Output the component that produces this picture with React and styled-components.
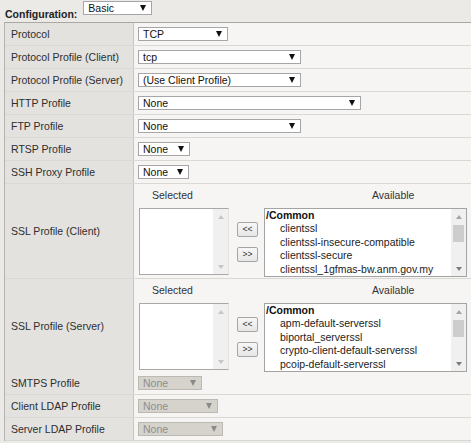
import React from 'react'
import styled, { createGlobalStyle } from 'styled-components'

const GlobalStyle = createGlobalStyle`
  html, body {
    margin: 0;
    padding: 0;
    background: #ebeae7;
  }
  body {
    font-family: "Liberation Sans", Arial, sans-serif;
    font-size: 10.5px;
    color: #2b2b2b;
  }
`

const rows = [
    { label: 'Protocol', value: 'TCP', width: 90 },
    { label: 'Protocol Profile (Client)', value: 'tcp', width: 163 },
    { label: 'Protocol Profile (Server)', value: '(Use Client Profile)', width: 163 },
    { label: 'HTTP Profile', value: 'None', width: 223 },
    { label: 'FTP Profile', value: 'None', width: 163 },
    { label: 'RTSP Profile', value: 'None', width: 52 },
    { label: 'SSH Proxy Profile', value: 'None', width: 51 },
]

const disabledRows = [
    { label: 'SMTPS Profile', width: 64 },
    { label: 'Client LDAP Profile', width: 80 },
    { label: 'Server LDAP Profile', width: 85 },
]

const clientSsl = ['clientssl', 'clientssl-insecure-compatible', 'clientssl-secure', 'clientssl_1gfmas-bw.anm.gov.my']
const serverSsl = ['apm-default-serverssl', 'biportal_serverssl', 'crypto-client-default-serverssl', 'pcoip-default-serverssl']

const Select = ({ value, width, disabled }) => (
    <SelectBox $w={width} $disabled={disabled}>
        <SelectText>{value}</SelectText>
        <Arrow $disabled={disabled} />
    </SelectBox>
)

const Scrollbar = ({ thumb, dim }) => (
    <Track>
        <ScrollArrow $dim={dim} />
        {thumb && <Thumb />}
        <Spacer />
        <ScrollArrow $dim={dim} $down />
    </Track>
)

const DualList = ({ items, height, top }) => (
    <SslWrap>
        <Headers>
            <SelectedHead>Selected</SelectedHead>
            <AvailableHead>Available</AvailableHead>
        </Headers>
        <Lists>
            <SelectedList>
                <ListBody />
                <Scrollbar dim />
            </SelectedList>
            <MoveButtons>
                <MoveButton>&lt;&lt;</MoveButton>
                <MoveButton>&gt;&gt;</MoveButton>
            </MoveButtons>
            <AvailableList>
                <ListBody>
                    <Folder>/Common</Folder>
                    {items.map(item => <Item key={item}>{item}</Item>)}
                </ListBody>
                <Scrollbar thumb />
            </AvailableList>
        </Lists>
    </SslWrap>
)

const App = () => {
    return (
        <Page>
            <GlobalStyle />
            <Header>
                <ConfigLabel>Configuration:</ConfigLabel>
                <Select value="Basic" width={69} />
            </Header>
            <Table>
                {rows.map(r => (
                    <Row key={r.label}>
                        <Label>{r.label}</Label>
                        <Value><Select value={r.value} width={r.width} /></Value>
                    </Row>
                ))}
                <Row $h={94}>
                    <Label>SSL Profile (Client)</Label>
                    <Value $top><DualList items={clientSsl} /></Value>
                </Row>
                <Row $h={92}>
                    <Label>SSL Profile (Server)</Label>
                    <Value $top><DualList items={serverSsl} /></Value>
                </Row>
                {disabledRows.map(r => (
                    <Row key={r.label}>
                        <Label>{r.label}</Label>
                        <Value><Select value="None" width={r.width} disabled /></Value>
                    </Row>
                ))}
            </Table>
        </Page>
    )
}

export default App

const Page = styled.div`
    width: 471px;
    height: 443px;
    overflow: hidden;
`;

const Header = styled.div`
    height: 22px;
    box-sizing: border-box;
    padding: 1px 0 0 5px;
    display: flex;
    align-items: flex-start;
`;

const ConfigLabel = styled.div`
    font-weight: bold;
    font-size: 10.5px;
    line-height: 12px;
    color: #222;
    margin-top: 7px;
    margin-right: 6px;
`;

const Table = styled.div`
    margin-left: 4px;
    border-top: 1px solid #a9a8a5;
    border-left: 1px solid #b4b3b0;
`;

const Row = styled.div`
    display: grid;
    grid-template-columns: 129px 1fr;
    height: ${p => p.$h || 22}px;
    border-bottom: 1px solid #d9d8d5;
`;

const Label = styled.div`
    background: #e3e2df;
    border-right: 1px solid #c6c5c2;
    display: flex;
    align-items: center;
    padding-left: 6px;
    color: #2e2e2e;
`;

const Value = styled.div`
    background: #f6f5f3;
    display: flex;
    align-items: ${p => p.$top ? 'flex-start' : 'center'};
    padding-left: 4px;
`;

const SelectBox = styled.div`
    box-sizing: border-box;
    width: ${p => p.$w}px;
    height: 14px;
    border: 1px solid ${p => p.$disabled ? '#bcb9b2' : '#a6a6a6'};
    background: ${p => p.$disabled ? '#d6d3cd' : '#fff'};
    display: flex;
    align-items: center;
    padding: 0 5px 0 4px;
    color: ${p => p.$disabled ? '#8d8d8d' : '#111'};
`;

const SelectText = styled.span`
    flex: 1;
    line-height: 12px;
    white-space: nowrap;
    overflow: hidden;
`;

const Arrow = styled.span`
    width: 0;
    height: 0;
    border-left: 3.5px solid transparent;
    border-right: 3.5px solid transparent;
    border-top: 6px solid ${p => p.$disabled ? '#8a8a8a' : '#111'};
`;

const SslWrap = styled.div`
    padding-top: 5px;
    padding-left: 1px;
`;

const Headers = styled.div`
    display: flex;
    height: 12px;
    line-height: 12px;
    margin-bottom: 7px;
    color: #333;
`;

const SelectedHead = styled.div`
    padding-left: 13px;
    width: 220px;
`;

const AvailableHead = styled.div``;

const Lists = styled.div`
    display: flex;
    align-items: flex-start;
`;

const SelectedList = styled.div`
    box-sizing: border-box;
    width: 90px;
    height: 67px;
    display: flex;
    border: 1px solid #a9a9a9;
    border-right-color: #e2e2e2;
    background: #fff;
`;

const AvailableList = styled.div`
    box-sizing: border-box;
    width: 203px;
    height: 69px;
    display: flex;
    border: 1px solid #a3a3a3;
    background: #fff;
`;

const ListBody = styled.div`
    flex: 1;
    overflow: hidden;
    padding-left: 1px;
`;

const Folder = styled.div`
    font-weight: bold;
    line-height: 13.4px;
    color: #111;
`;

const Item = styled.div`
    padding-left: 14px;
    line-height: 13.4px;
    white-space: nowrap;
    color: #222;
`;

const Track = styled.div`
    width: 15px;
    background: #f0f0f0;
    display: flex;
    flex-direction: column;
    align-items: center;
    padding: 6px 0 5px;
    box-sizing: border-box;
`;

const ScrollArrow = styled.span`
    width: 0;
    height: 0;
    border-left: 3px solid transparent;
    border-right: 3px solid transparent;
    ${p => p.$down
        ? `border-top: 4px solid ${p.$dim ? '#c6c6c6' : '#7d7d7d'};`
        : `border-bottom: 4px solid ${p.$dim ? '#c6c6c6' : '#a6a6a6'};`}
`;

const Thumb = styled.div`
    width: 11px;
    height: 17px;
    margin-top: 6px;
    background: #cdcdcd;
`;

const Spacer = styled.div`
    flex: 1;
`;

const MoveButtons = styled.div`
    width: 35px;
    height: 67px;
    display: flex;
    flex-direction: column;
    justify-content: center;
    align-items: center;
    gap: 10px;
    padding-left: 2px;
    box-sizing: border-box;
`;

const MoveButton = styled.div`
    box-sizing: border-box;
    width: 21px;
    height: 15px;
    border: 1px solid #a5a5a5;
    border-radius: 2px;
    background: linear-gradient(#f7f7f7, #e6e6e6);
    font-size: 8.5px;
    line-height: 13px;
    text-align: center;
    color: #333;
`;
